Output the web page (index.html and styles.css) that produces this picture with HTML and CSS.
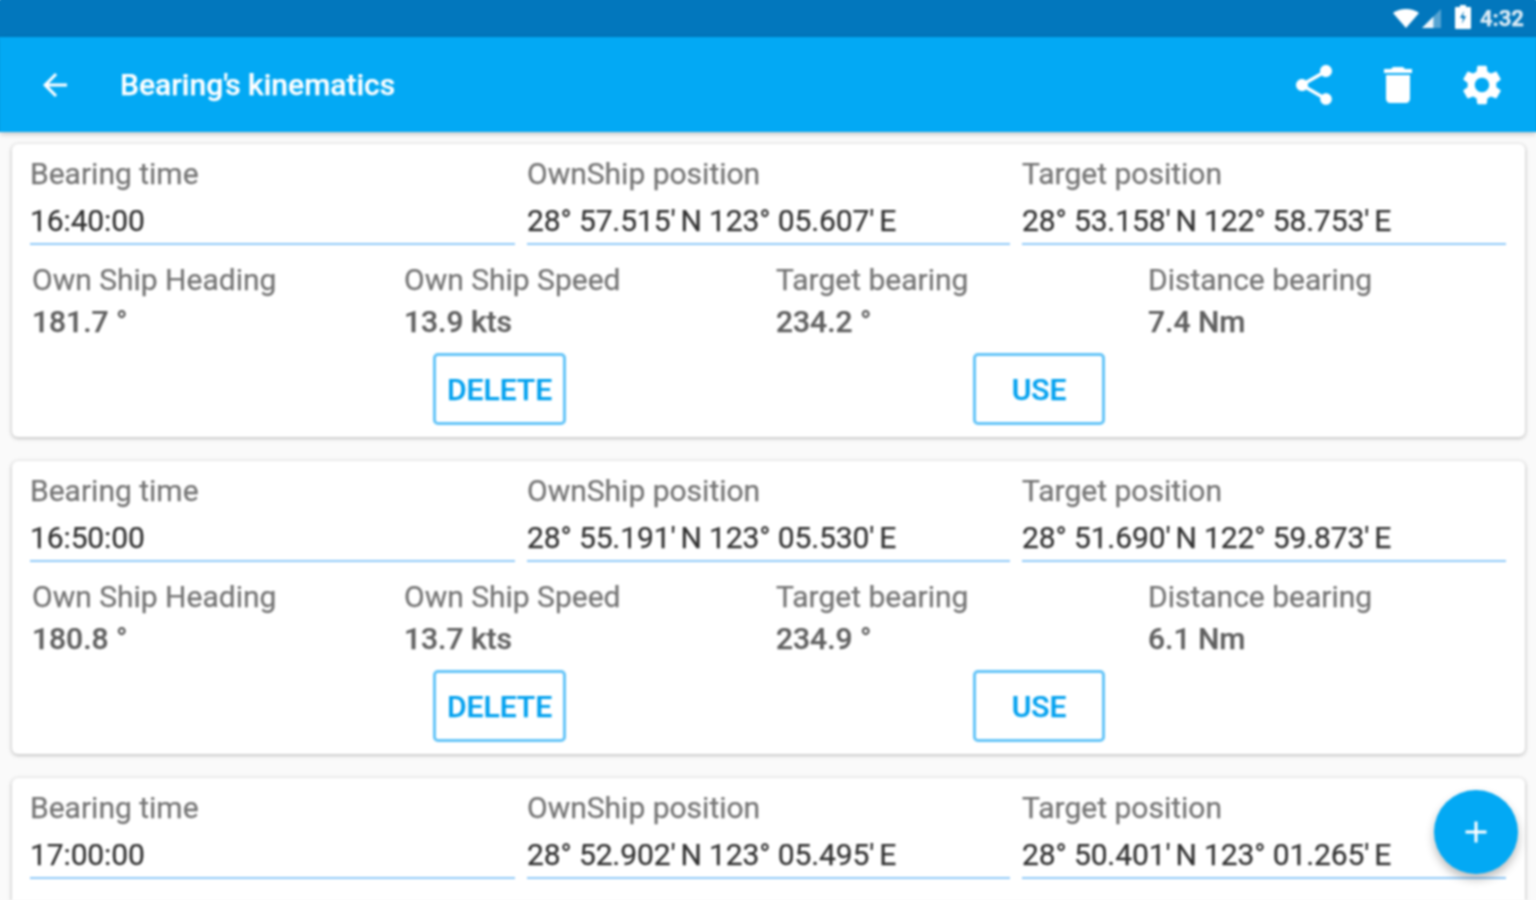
FILE: index.html
```html
<!DOCTYPE html>
<html lang="en">
<head>
<meta charset="utf-8">
<title>Bearing's kinematics</title>
<link rel="stylesheet" href="styles.css">
</head>
<body>
<div class="screen">
  <div class="status">
    <svg class="st-wifi" viewBox="0 0 26 20"><path d="M13 19 0 4C3.500 1.300 8 0 13 0s9.500 1.300 13 4z"/></svg>
    <svg class="st-signal" viewBox="0 0 20 20"><path d="M0 20 20 0v20z" opacity=".35"/><path d="M0 20 12 8v12z"/></svg>
    <svg class="st-batt" viewBox="0 0 16 24"><path fill-rule="evenodd" d="M5 0h6v2h4a1 1 0 0 1 1 1v20a1 1 0 0 1-1 1H1a1 1 0 0 1-1-1V3a1 1 0 0 1 1-1h4zM9 6 5 13h3l-1 6 4-8H8z"/></svg>
    <span class="st-time">4:32</span>
  </div>
  <header class="appbar">
    <svg class="back" viewBox="0 0 24 24"><path d="M20 11H7.830l5.590-5.590L12 4l-8 8 8 8 1.410-1.410L7.830 13H20z"/></svg>
    <h1 class="title">Bearing<span class="q">'</span>s kinematics</h1>
    <div class="actions">
      <svg class="act" viewBox="0 0 24 24"><path d="M18 16.080c-.76 0-1.440.3-1.960.77L8.910 12.700c.05-.23.090-.46.090-.7s-.04-.47-.09-.7l7.050-4.110c.54.5 1.250.81 2.040.81 1.660 0 3-1.340 3-3s-1.340-3-3-3-3 1.340-3 3c0 .24.04.47.09.7L8.040 9.810C7.500 9.310 6.790 9 6 9c-1.660 0-3 1.340-3 3s1.340 3 3 3c.79 0 1.500-.31 2.040-.81l7.120 4.160c-.05.21-.08.43-.08.65 0 1.610 1.310 2.920 2.920 2.920s2.920-1.310 2.920-2.920-1.310-2.920-2.920-2.920z"/></svg>
      <svg class="act" viewBox="0 0 24 24"><path d="M6 19c0 1.100.9 2 2 2h8c1.100 0 2-.9 2-2V7H6zM19 4h-3.500l-1-1h-5l-1 1H5v2h14z"/></svg>
      <svg class="act" viewBox="0 0 24 24"><path d="M19.140 12.940c.04-.3.060-.61.060-.94 0-.32-.02-.64-.07-.94l2.030-1.580c.18-.14.230-.41.120-.61l-1.920-3.320c-.12-.22-.37-.29-.59-.22l-2.390.96c-.5-.38-1.030-.7-1.620-.94l-.36-2.540c-.04-.24-.24-.41-.48-.41h-3.840c-.24 0-.43.170-.47.410l-.36 2.540c-.59.240-1.130.570-1.620.94l-2.390-.96c-.22-.08-.47 0-.59.220L2.740 8.870c-.12.210-.08.470.12.610l2.030 1.580c-.05.3-.09.630-.09.940s.02.640.07.940l-2.030 1.580c-.18.140-.23.410-.12.610l1.920 3.320c.12.220.37.290.59.220l2.390-.96c.5.380 1.030.7 1.620.94l.36 2.540c.05.240.24.410.48.410h3.840c.24 0 .44-.17.47-.41l.36-2.540c.59-.24 1.130-.56 1.620-.94l2.390.96c.22.080.47 0 .59-.22l1.920-3.320c.12-.22.070-.47-.12-.61l-2.010-1.580zM12 15.600c-1.980 0-3.600-1.620-3.600-3.600s1.620-3.600 3.600-3.600 3.600 1.620 3.600 3.600-1.620 3.600-3.600 3.600z"/></svg>
    </div>
  </header>
  <main class="list">
    <section class="card">
      <div class="row-top">
        <div class="field"><div class="label">Bearing time</div><div class="input">16:40:00</div></div>
        <div class="field"><div class="label">OwnShip position</div><div class="input">28° 57.515<span class="q">'</span> N 123° 05.607<span class="q">'</span> E</div></div>
        <div class="field"><div class="label">Target position</div><div class="input">28° 53.158<span class="q">'</span> N 122° 58.753<span class="q">'</span> E</div></div>
      </div>
      <div class="row-stats">
        <div><div class="label">Own Ship Heading</div><div class="stat">181.7 °</div></div>
        <div><div class="label">Own Ship Speed</div><div class="stat">13.9 kts</div></div>
        <div><div class="label">Target bearing</div><div class="stat">234.2 °</div></div>
        <div><div class="label">Distance bearing</div><div class="stat">7.4 Nm</div></div>
      </div>
      <div class="row-btn"><button class="btn">DELETE</button><button class="btn">USE</button></div>
    </section>
    <section class="card">
      <div class="row-top">
        <div class="field"><div class="label">Bearing time</div><div class="input">16:50:00</div></div>
        <div class="field"><div class="label">OwnShip position</div><div class="input">28° 55.191<span class="q">'</span> N 123° 05.530<span class="q">'</span> E</div></div>
        <div class="field"><div class="label">Target position</div><div class="input">28° 51.690<span class="q">'</span> N 122° 59.873<span class="q">'</span> E</div></div>
      </div>
      <div class="row-stats">
        <div><div class="label">Own Ship Heading</div><div class="stat">180.8 °</div></div>
        <div><div class="label">Own Ship Speed</div><div class="stat">13.7 kts</div></div>
        <div><div class="label">Target bearing</div><div class="stat">234.9 °</div></div>
        <div><div class="label">Distance bearing</div><div class="stat">6.1 Nm</div></div>
      </div>
      <div class="row-btn"><button class="btn">DELETE</button><button class="btn">USE</button></div>
    </section>
    <section class="card">
      <div class="row-top">
        <div class="field"><div class="label">Bearing time</div><div class="input">17:00:00</div></div>
        <div class="field"><div class="label">OwnShip position</div><div class="input">28° 52.902<span class="q">'</span> N 123° 05.495<span class="q">'</span> E</div></div>
        <div class="field"><div class="label">Target position</div><div class="input">28° 50.401<span class="q">'</span> N 123° 01.265<span class="q">'</span> E</div></div>
      </div>
    </section>
  </main>
  <button class="fab"><svg viewBox="0 0 24 24"><path d="M19 13h-6v6h-2v-6H5v-2h6V5h2v6h6z"/></svg></button>
</div>
</body>
</html>
```

FILE: styles.css
```css
* { box-sizing: border-box; }
html, body { margin: 0; padding: 0; width: 1536px; height: 900px; overflow: hidden; }
body { font-family: Roboto, "Liberation Sans", sans-serif; background: #fafafa; }
.screen { position: relative; width: 1536px; height: 900px; background: #fafafa; filter: blur(0.9px); -webkit-text-stroke: .25px; }
.q { letter-spacing: -2.5px; }

.status { height: 37px; background: #0277bd; box-shadow: 0 -6px 0 #0277bd, 6px 0 0 #0277bd, -6px 0 0 #0277bd; display: flex; align-items: center; justify-content: flex-end; padding-right: 12px; color: #dcebf5; }
.st-wifi { width: 26px; height: 20px; fill: #fff; margin-right: 3px; }
.st-signal { width: 19px; height: 19px; fill: #f0f6fa; margin-right: 14px; }
.st-batt { width: 16px; height: 24px; fill: #fff; margin-right: 9px; margin-bottom: 4px; }
.st-time { font-size: 22px; font-weight: 700; }

.appbar { height: 95px; background: #03a9f4; display: flex; align-items: center; padding-left: 37px; color: #fff; box-shadow: 0 2px 5px rgba(0,0,0,.22), 6px 0 0 #03a9f4, -6px 0 0 #03a9f4; position: relative; z-index: 1; }
.back { width: 36px; height: 36px; fill: #fff; }
.title { margin: 0 0 0 47px; font-size: 30px; font-weight: 500; flex: 1; }
.title .q { letter-spacing: -3px; }
.actions { display: flex; gap: 36px; padding-right: 30px; }
.act { width: 48px; height: 48px; fill: #fff; }

.list { height: 768px; overflow: hidden; padding: 12px 11px 0 12px; display: flex; flex-direction: column; gap: 24px; }
.card { background: #fff; height: 293px; border-radius: 6px; box-shadow: 0 1px 4px rgba(0,0,0,.3); padding: 10px 19px 0 18px; flex: none; }

.row-top { display: grid; grid-template-columns: 485px 483px 484px; column-gap: 12px; }
.label { font-size: 30px; line-height: 40px; color: #757575; white-space: nowrap; }
.input { font-size: 30px; line-height: 40px; height: 51px; padding-top: 7px; color: #333; letter-spacing: -.12px; border-bottom: 2px solid #90caf9; white-space: nowrap; }

.row-stats { display: grid; grid-template-columns: repeat(4, 372px); margin: 15px 0 0 2px; }
.stat { font-size: 30px; line-height: 44px; font-weight: 500; color: #606060; white-space: nowrap; }

.row-btn { display: flex; justify-content: center; gap: 407px; margin-top: 9px; padding-left: 2px; }
.btn { width: 133px; height: 72px; background: #fff; border: 3px solid #64c4f8; border-radius: 5px; color: #03a1ef; font: 500 30px Roboto, sans-serif; padding: 0; }
.btn + .btn { width: 132px; }

.fab { position: absolute; left: 1434px; top: 790px; width: 84px; height: 84px; border-radius: 50%; border: 0; padding: 0; background: #03a9f4; box-shadow: 0 5px 10px rgba(0,0,0,.28); display: flex; align-items: center; justify-content: center; }
.fab svg { width: 36px; height: 36px; fill: #fff; }
```
